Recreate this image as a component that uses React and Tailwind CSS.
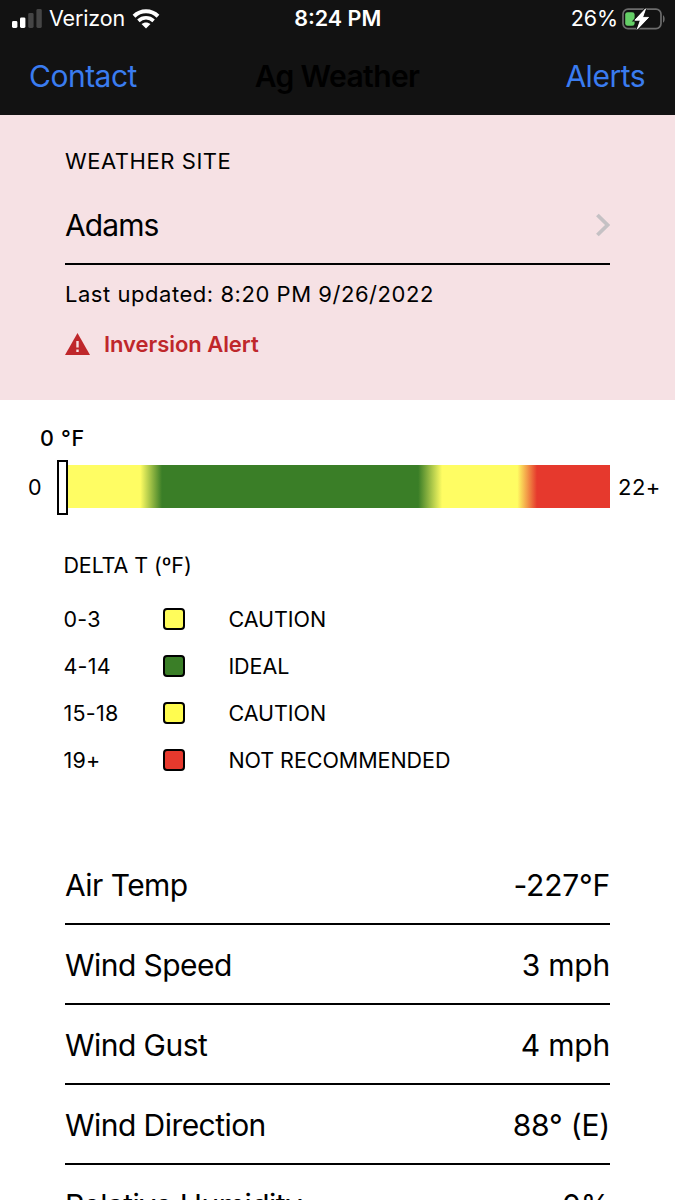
import React from 'react'

const legend = [
  { range: '0-3', label: 'CAUTION', color: 'bg-[#fffc5b]' },
  { range: '4-14', label: 'IDEAL', color: 'bg-[#3a7e27]' },
  { range: '15-18', label: 'CAUTION', color: 'bg-[#fffc4f]' },
  { range: '19+', label: 'NOT RECOMMENDED', color: 'bg-[#e6392d]' },
]

const readings = [
  { name: 'Air Temp', value: '-227°F' },
  { name: 'Wind Speed', value: '3 mph' },
  { name: 'Wind Gust', value: '4 mph' },
  { name: 'Wind Direction', value: '88° (E)' },
  { name: 'Relative Humidity', value: '0%' },
]

function SignalIcon(){
  return (
    <svg width="30" height="20" viewBox="0 0 30 20" className="shrink-0">
      <rect x="0" y="12" width="5.4" height="7" rx="1.4" fill="#fff" />
      <rect x="8" y="8.4" width="5.4" height="10.6" rx="1.4" fill="#fff" />
      <rect x="16.2" y="4" width="5.4" height="15" rx="1.4" fill="#454545" />
      <rect x="24.4" y="0" width="5.4" height="19" rx="1.4" fill="#454545" />
    </svg>
  )
}

function WifiIcon(){
  return (
    <svg width="28" height="20" viewBox="0 0 28 20" className="-ml-px shrink-0">
      <path d="M2 7.2C8.8 .6 19.2 .6 26 7.2" fill="none" stroke="#fff" strokeWidth="4" />
      <path d="M6.4 11.8C10.8 7.8 17.2 7.8 21.6 11.8" fill="none" stroke="#fff" strokeWidth="3.6" />
      <path d="M14 19.6L9.5 15.1C12 12.9 16 12.9 18.5 15.1Z" fill="#fff" />
    </svg>
  )
}

function BatteryIcon(){
  return (
    <svg width="44" height="22" viewBox="0 0 44 22" className="shrink-0">
      <rect x="1" y="1.2" width="38" height="19.4" rx="5" fill="none" stroke="#6c6c6c" strokeWidth="1.7" />
      <path d="M41 7.2C43.2 8 43.2 13.8 41 14.6Z" fill="#6c6c6c" />
      <rect x="3.2" y="4.2" width="9.4" height="13.6" rx="2.4" fill="#65cf67" />
      <path d="M23.6 .8L12.8 12.2H18.4L15.2 21.2L26.6 9.4H20.6Z" fill="#fff" stroke="#121212" strokeWidth="2.6" paintOrder="stroke" />
      <path d="M23.6 .8L12.8 12.2H18.4L15.2 21.2L26.6 9.4H20.6Z" fill="#fff" stroke="#fff" strokeWidth=".8" strokeLinejoin="round" />
    </svg>
  )
}

function StatusBar(){
  return (
    <div className="flex h-[37px] items-center pl-[11.5px] pr-[9px] text-[21.5px] text-white">
      <div className="flex flex-1 items-center">
        <SignalIcon />
        <span className="ml-[7.5px] mr-2 tracking-[-0.15px]">Verizon</span>
        <WifiIcon />
      </div>
      <span className="mr-0.5 text-center font-semibold">8:24 PM</span>
      <div className="flex flex-1 items-center justify-end gap-1">
        <span className="tracking-[-0.1px]">26%</span>
        <BatteryIcon />
      </div>
    </div>
  )
}

function Gauge(){
  return (
    <section className="pt-[25px]">
      <p className="ml-10 text-[21.5px] font-medium leading-[26px] tracking-[0.7px]">0 °F</p>
      <div className="mt-[8px] flex h-[55px] items-center">
        <span className="w-[65px] pl-7 pt-px text-[21.5px]">0</span>
        <div className="relative h-[43px] w-[545px] bg-[linear-gradient(to_right,#fffd63_13.8%,#3a7e27_17.8%,#3a7e27_64.8%,#fffd63_69.2%,#fffd63_83%,#e6392d_86.6%)]">
          <div className="absolute -left-2 -top-[5px] h-[55px] w-[11px] border-2 border-black bg-white" />
        </div>
        <span className="ml-2 pt-0.5 text-[22px] tracking-[0.5px]">22+</span>
      </div>
    </section>
  )
}

export default function App(){
  return (
    <div className="h-[1200px] overflow-hidden bg-white font-['Inter',sans-serif] text-black">
      <header className="h-[115px] bg-[#121212]">
        <StatusBar />
        <nav className="grid h-[78px] grid-cols-[1fr_auto_1fr] items-center pl-[29px] pr-[30px] text-[30px] text-[#3a7cf0]">
          <a className="tracking-[-0.5px]">Contact</a>
          <h1 className="text-[30px] font-semibold tracking-[-0.6px] text-black">Ag Weather</h1>
          <a className="text-right tracking-[-0.5px]">Alerts</a>
        </nav>
      </header>

      <section className="h-[285px] bg-[#f6e1e4] px-[65px] pt-8">
        <p className="text-[22px] leading-[28px] tracking-[0.55px]">WEATHER SITE</p>
        <div className="mt-[10px] flex h-[80px] items-center justify-between border-b-2 border-black">
          <span className="pt-0.5 text-[30px] tracking-[-0.9px]">Adams</span>
          <svg width="15" height="24" viewBox="0 0 15 24" className="mt-0.5">
            <path d="M2.4 2L12.6 12L2.4 22" fill="none" stroke="#c5c1c4" strokeWidth="3.8" />
          </svg>
        </div>
        <p className="mt-[15px] text-[22px] leading-[28px] tracking-[0.54px]">Last updated: 8:20 PM 9/26/2022</p>
        <div className="mt-[22px] flex items-center text-[#bf272b]">
          <svg width="25" height="22" viewBox="0 0 25 22">
            <path d="M12.5 0L25 22H0Z" fill="#bf272b" />
            <path d="M12.5 8V14.4M12.5 16.6V19" stroke="#f6e1e4" strokeWidth="2.4" />
          </svg>
          <span className="ml-[14px] text-[22px] font-semibold leading-[28px] tracking-[-0.05px]">Inversion Alert</span>
        </div>
      </section>

      <Gauge />

      <section className="mt-9 px-[63.4px] text-[21.5px]">
        <h2 className="h-[30px] leading-[30px] tracking-[-0.1px]">DELTA T (ºF)</h2>
        <div className="mt-4">
          {legend.map((row) => (
            <div key={row.range} className="flex h-[46.8px] items-center">
              <span className="w-[100px] tracking-[0.3px]">{row.range}</span>
              <span className={`mr-[43px] h-[22px] w-[22px] rounded-[4px] border-2 border-black ${row.color}`} />
              <span className="tracking-[-0.05px]">{row.label}</span>
            </div>
          ))}
        </div>
      </section>

      <section className="mt-[62px] px-[65px] text-[30px]">
        {readings.map((r) => (
          <div key={r.name} className="flex h-20 items-center justify-between border-b-2 border-black pt-0.5">
            <span className="tracking-[-0.55px]">{r.name}</span>
            <span className="tracking-[-0.2px]">{r.value}</span>
          </div>
        ))}
      </section>
    </div>
  )
}
